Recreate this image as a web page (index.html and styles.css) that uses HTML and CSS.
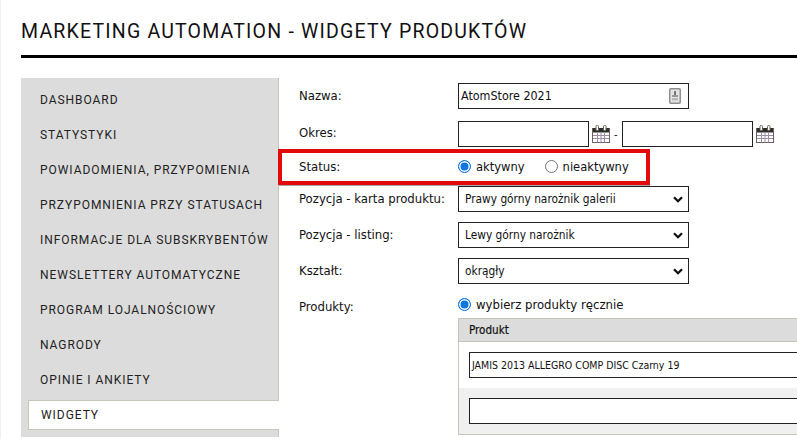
FILE: index.html
```html
<!DOCTYPE html>
<html lang="pl">
<head>
<meta charset="utf-8">
<title>Widgety produktów</title>
<link rel="stylesheet" href="styles.css">
</head>
<body>
<div class="page">
  <h1 class="title">MARKETING AUTOMATION - WIDGETY PRODUKTÓW</h1>
  <div class="columns">
    <nav class="side">
      <a class="item">DASHBOARD</a>
      <a class="item">STATYSTYKI</a>
      <a class="item">POWIADOMIENIA, PRZYPOMIENIA</a>
      <a class="item">PRZYPOMNIENIA PRZY STATUSACH</a>
      <a class="item">INFORMACJE DLA SUBSKRYBENTÓW</a>
      <a class="item">NEWSLETTERY AUTOMATYCZNE</a>
      <a class="item">PROGRAM LOJALNOŚCIOWY</a>
      <a class="item">NAGRODY</a>
      <a class="item">OPINIE I ANKIETY</a>
      <a class="item active">WIDGETY</a>
    </nav>
    <form class="form">
      <div class="row r-name">
        <label class="lab">Nazwa:</label>
        <div class="box wide name-box"><span>AtomStore 2021</span>
          <svg class="badge" width="12" height="16" viewBox="0 0 12 16"><rect x="0.750" y="0.750" width="10.500" height="14.500" rx="1" fill="#e4e4e4" stroke="#8f8f8f" stroke-width="1.500"/><rect x="5" y="3" width="2" height="4" fill="#777"/><rect x="3" y="7" width="6" height="2" fill="#999"/><rect x="3" y="10" width="6" height="2.500" fill="#bbb"/></svg>
        </div>
      </div>
      <div class="row r-date">
        <label class="lab">Okres:</label>
        <div class="dates">
          <div class="box short"></div>
          <svg class="cal" width="18" height="18" viewBox="0 0 18 18"><use href="#cal"/></svg>
          <span class="dash">-</span>
          <div class="box short"></div>
          <svg class="cal" width="18" height="18" viewBox="0 0 18 18"><use href="#cal"/></svg>
        </div>
      </div>
      <div class="row r-status">
        <label class="lab">Status:</label>
        <div class="radios">
          <span class="radio on"></span><span class="rtext">aktywny</span>
          <span class="radio off"></span><span class="rtext">nieaktywny</span>
        </div>
      </div>
      <div class="row r-sel">
        <label class="lab">Pozycja - karta produktu:</label>
        <div class="box wide sel"><span>Prawy górny narożnik galerii</span><svg width="10" height="7" viewBox="0 0 10 7"><path d="M1 1.200 5 5.200l4-4" fill="none" stroke="#111" stroke-width="2.300"/></svg></div>
      </div>
      <div class="row r-sel">
        <label class="lab">Pozycja - listing:</label>
        <div class="box wide sel"><span>Lewy górny narożnik</span><svg width="10" height="7" viewBox="0 0 10 7"><path d="M1 1.200 5 5.200l4-4" fill="none" stroke="#111" stroke-width="2.300"/></svg></div>
      </div>
      <div class="row r-sel">
        <label class="lab">Kształt:</label>
        <div class="box wide sel"><span>okrągły</span><svg width="10" height="7" viewBox="0 0 10 7"><path d="M1 1.200 5 5.200l4-4" fill="none" stroke="#111" stroke-width="2.300"/></svg></div>
      </div>
      <div class="row r-prod">
        <label class="lab">Produkty:</label>
        <div class="prod">
          <div class="radios"><span class="radio on"></span><span class="rtext">wybierz produkty ręcznie</span></div>
          <div class="table">
            <div class="thead">Produkt</div>
            <div class="tr"><div class="box full">JAMIS 2013 ALLEGRO COMP DISC Czarny 19</div></div>
            <div class="tr alt"><div class="box full"></div></div>
          </div>
        </div>
      </div>
    </form>
  </div>
  <div class="mark"></div>
</div>
<svg class="defs" width="0" height="0">
  <symbol id="cal" viewBox="0 0 18 18">
    <rect x="0.500" y="3.500" width="17" height="14" fill="#fff" stroke="#6f5f5f"/>
    <rect x="1" y="3" width="16" height="4.500" fill="#2d2d2d"/>
    <path d="M1 10.500h16M1 13.500h16M5.500 7.500v10M9 7.500v10M12.500 7.500v10" stroke="#9c8ea6" stroke-width="1"/>
    <rect x="4" y="0.500" width="2.500" height="5" rx="1" fill="#fff" stroke="#665"/>
    <rect x="11.500" y="0.500" width="2.500" height="5" rx="1" fill="#fff" stroke="#665"/>
  </symbol>
</svg>
</body>
</html>
```

FILE: styles.css
```css
* { box-sizing: border-box; }
html, body { margin: 0; padding: 0; height: 100%; overflow: hidden; background: #fff; }
body { border-left: 1px solid #efefef; font-family: "DejaVu Sans Condensed", "DejaVu Sans", sans-serif; color: #111; }
.page { position: relative; padding: 19px 0 0 20px; height: 439px; width: 796px; overflow: hidden; }
.title { margin: 0; height: 39px; border-bottom: 3px solid #000; font: 400 19.500px/26px Roboto, sans-serif; letter-spacing: 1.200px; color: #111; }
.columns { display: flex; margin-top: 20px; }
.side { width: 258px; height: 359px; flex: none; padding-top: 5px; background: #dcdcdc; border-right: 1px solid #c8c4b8; }
.item { display: block; height: 35px; padding-left: 19px; font: 400 12px/35px Roboto, sans-serif; letter-spacing: 0.950px; color: #222; white-space: nowrap; }
.item.active { height: 30px; margin: 2px -1px 0 7px; padding-left: 12px; line-height: 29px; background: #fff; border: 1px solid #c8c4b8; border-right: 0; }
.form { flex: 1; padding: 5px 0 0 20px; min-width: 0; }
.row { display: flex; align-items: flex-start; font-size: 13px; }
.lab { width: 159px; flex: none; white-space: nowrap; line-height: 16px; font-size: 13px; }
.r-name { height: 38px; }
.r-name .lab { padding-top: 5px; }
.r-date { height: 37px; }
.r-date .lab { padding-top: 4px; }
.r-status { height: 28px; }
.r-status .lab { padding-top: 1px; }
.r-sel { height: 36px; }
.r-sel .lab { padding-top: 5px; }
.box { height: 26px; border: 1px solid #222; background: #fff; font-size: 12.400px; line-height: 24px; padding-left: 2px; }
.wide { width: 231px; }
.short { width: 131px; }
.name-box { display: flex; justify-content: space-between; align-items: center; padding-right: 7px; }
.badge { flex: none; }
.dates { display: flex; align-items: center; }
.cal { margin-left: 3px; flex: none; }
.dash { margin: 0 5px 0 4px; width: 3px; font-size: 11px; }
.radios { display: flex; align-items: center; height: 16px; }
.radio { width: 13px; height: 13px; border-radius: 50%; flex: none; background: #fff; }
.radio.on { border: 1.500px solid #0f75e0; box-shadow: inset 0 0 0 1.500px #fff; background: #0f75e0; }
.radio.off { border: 1px solid #767676; margin-left: 20px; }
.rtext { margin-left: 5px; font-size: 12.800px; }
.sel { display: flex; justify-content: space-between; align-items: center; padding: 0 5px 0 6px; font-size: 11.800px; }
.r-prod .lab { padding-top: 5px; }
.prod { flex: none; width: 360px; padding-top: 2px; }
.prod .rtext { font-size: 13px; }
.table { margin-top: 6px; border: 1px solid #c8c4b8; height: 117px; }
.thead { height: 23px; background: #dcdcdc; border-bottom: 1px solid #c8c4b8; padding-left: 10px; font-size: 11.600px; line-height: 22px; -webkit-text-stroke: 0.200px #111; }
.tr { height: 46px; padding: 10px 0 0 10px; }
.tr.alt { background: #f0f0f0; }
.full { width: 400px; font-size: 10.500px; padding-left: 2px; }
.mark { position: absolute; left: 277px; top: 149px; width: 372px; height: 36px; border: 4px solid #e30a0a; box-shadow: 0 1px 0 #aaa; }
.defs { position: absolute; }
```
